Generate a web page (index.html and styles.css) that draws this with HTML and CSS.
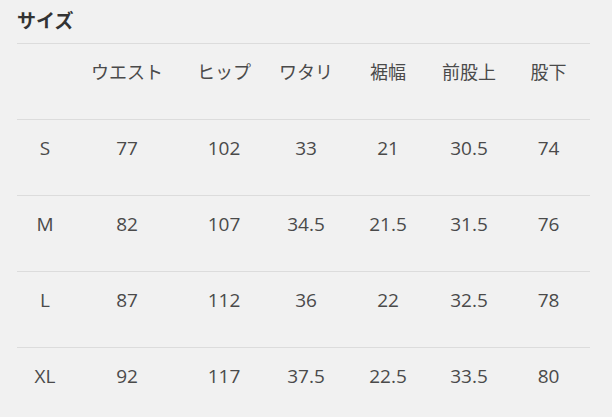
FILE: index.html
```html
<!DOCTYPE html>
<html lang="ja">
<head>
<meta charset="utf-8">
<link rel="stylesheet" href="styles.css">
</head>
<body>
<div class="wrap">
  <h3 class="title">サイズ</h3>
  <table class="size-table">
    <colgroup>
      <col class="c1"><col class="c2"><col class="c3"><col class="c4"><col class="c5"><col class="c6"><col class="c7">
    </colgroup>
    <thead>
      <tr><th></th><th>ウエスト</th><th>ヒップ</th><th>ワタリ</th><th>裾幅</th><th>前股上</th><th>股下</th></tr>
    </thead>
    <tbody>
      <tr><td>S</td><td>77</td><td>102</td><td>33</td><td>21</td><td>30.5</td><td>74</td></tr>
      <tr><td>M</td><td>82</td><td>107</td><td>34.5</td><td>21.5</td><td>31.5</td><td>76</td></tr>
      <tr><td>L</td><td>87</td><td>112</td><td>36</td><td>22</td><td>32.5</td><td>78</td></tr>
      <tr><td>XL</td><td>92</td><td>117</td><td>37.5</td><td>22.5</td><td>33.5</td><td>80</td></tr>
    </tbody>
  </table>
</div>
</body>
</html>
```
FILE: styles.css
```css
html, body {
  margin: 0;
  padding: 0;
  background: #f1f1f1;
}
body {
  font-family: "Open Sans", "Noto Sans CJK JP", sans-serif;
  color: #444;
}
.wrap {
  padding: 0 20px 0 17px;
}
.title {
  margin: 0;
  padding-top: 8px;
  height: 43px;
  box-sizing: border-box;
  font-size: 19px;
  line-height: 24px;
  font-weight: 700;
  color: #333;
  font-family: "Noto Sans CJK JP", sans-serif;
}
.size-table {
  width: 573px;
  border-collapse: collapse;
  table-layout: fixed;
}
.c1 { width: 56px; }
.c2 { width: 108px; }
.c3 { width: 86px; }
.c4 { width: 78px; }
.c5 { width: 86px; }
.c6 { width: 76px; }
.c7 { width: 83px; }
.size-table th,
.size-table td {
  border-top: 1px solid #dcdcdc;
  text-align: center;
  vertical-align: top;
  height: 76px;
  box-sizing: border-box;
  padding: 16px 0 0;
  font-size: 19px;
  line-height: 24px;
  font-weight: 400;
  color: #4a4a4a;
}
.size-table th {
  font-family: "Noto Sans CJK JP", sans-serif;
  font-size: 18px;
  padding-top: 15px;
}
```
